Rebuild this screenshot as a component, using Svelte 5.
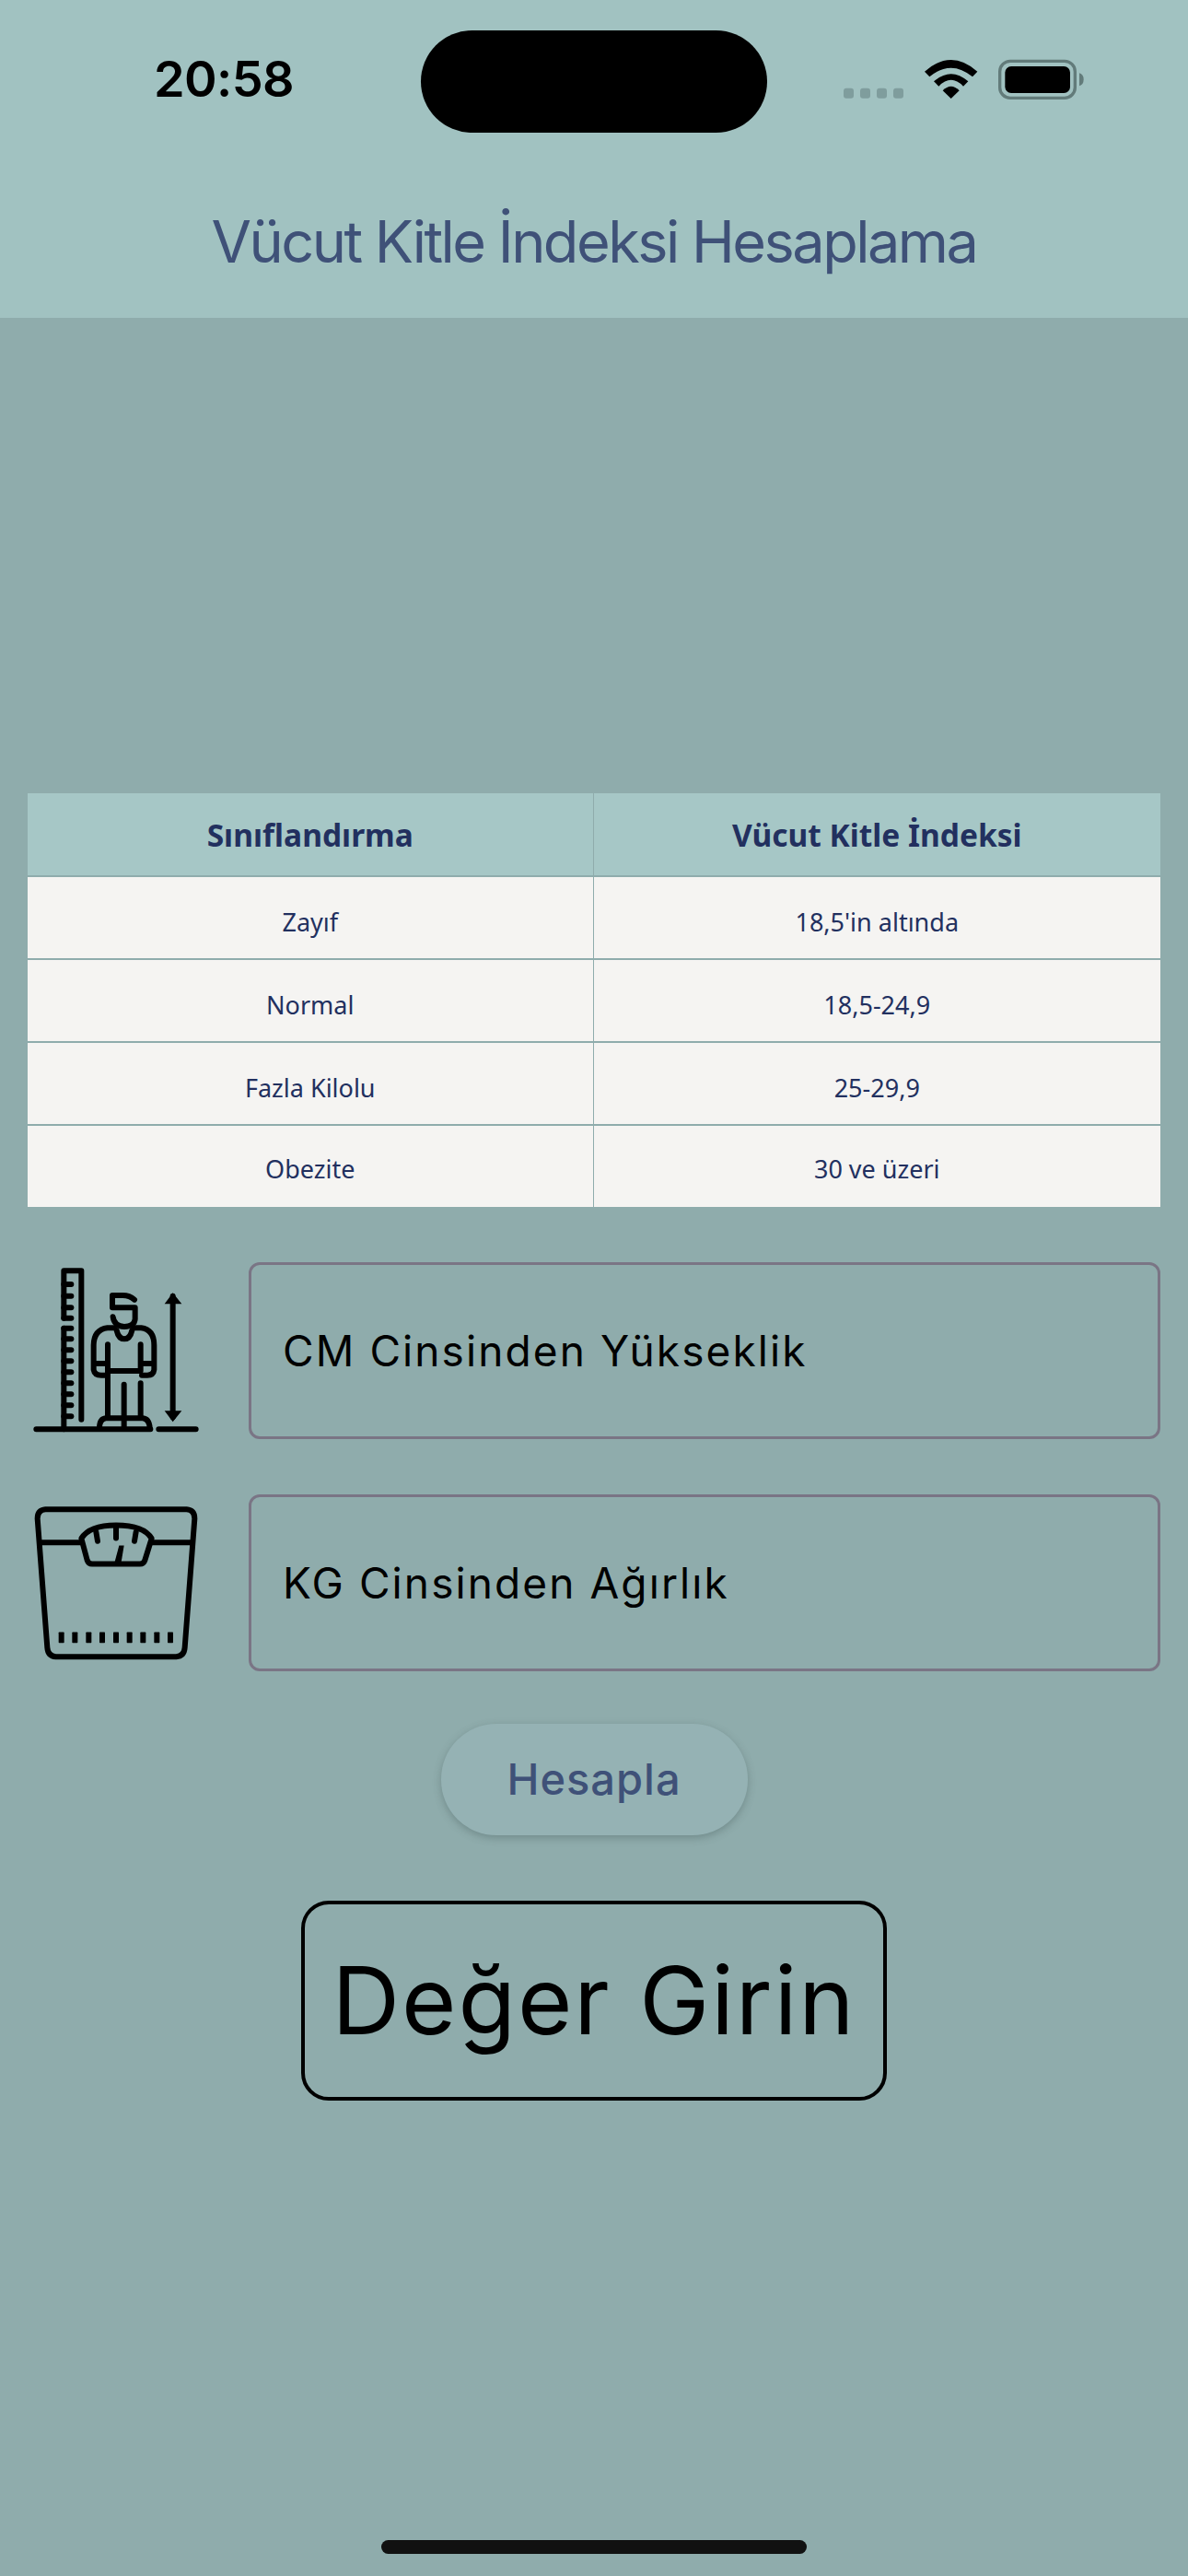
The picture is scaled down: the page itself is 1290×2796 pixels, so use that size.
<script>
	// BMI table rows
	const rows = [
		{ label: 'Zayıf', value: "18,5'in altında" },
		{ label: 'Normal', value: '18,5-24,9' },
		{ label: 'Fazla Kilolu', value: '25-29,9' },
		{ label: 'Obezite', value: '30 ve üzeri' }
	];

	let height = $state('');
	let weight = $state('');

	const rulerTicks = [102, 140, 178, 212, 245, 280, 316, 352, 388, 424, 460, 496, 532];
	const scaleDots = [140, 184, 229, 273, 318, 362, 406, 451, 495];
</script>

<main class="screen">
	<header class="top">
		<div class="status">
			<span class="time">20:58</span>
			<div class="island"></div>
			<svg class="status-icons" viewBox="0 0 960 270" aria-hidden="true">
				<g fill="#7f9d9d">
					<rect x="108" y="167" width="33" height="33" rx="9" />
					<rect x="162" y="167" width="33" height="33" rx="9" />
					<rect x="216" y="167" width="33" height="33" rx="9" />
					<rect x="270" y="167" width="33" height="33" rx="9" />
				</g>
				<path d="M372 113Q458 37 544 113L528 130Q458 72 388 130Z" />
				<path d="M402 145Q458 96 514 145L498 161Q458 120 418 161Z" />
				<path d="M431 175Q458 148 485 175L458 201Z" />
				<rect x="617" y="79" width="245" height="120" rx="34" fill="none" stroke="#627b7a" stroke-width="10" />
				<rect x="634" y="96" width="212" height="87" rx="20" />
				<path d="M876 118Q890 122 890 139Q890 156 876 160Z" fill="#627b7a" />
			</svg>
		</div>
		<h1>Vücut Kitle İndeksi Hesaplama</h1>
	</header>

	<section class="content">
		<table>
			<colgroup>
				<col class="first-col" />
				<col />
			</colgroup>
			<thead>
				<tr>
					<th>Sınıflandırma</th>
					<th>Vücut Kitle İndeksi</th>
				</tr>
			</thead>
			<tbody>
				{#each rows as row}
					<tr>
						<td>{row.label}</td>
						<td>{row.value}</td>
					</tr>
				{/each}
			</tbody>
		</table>

		<div class="field first">
			<svg class="icon" viewBox="0 30 720 576" aria-hidden="true">
				<g fill="none" stroke="#000" stroke-width="18" stroke-linecap="round" stroke-linejoin="round">
					<path d="M58 574H430M457 574H578" />
					<path d="M148 212V58H205V542M148 245V574" />
					{#each rulerTicks as y}
						<path d="M148 {y}H172" />
					{/each}
					<path d="M378 152Q362 138 340 138H306V178H380V215Q378 238 345 240Q312 238 308 208" />
					<path d="M312 244H290Q246 250 245 300V380Q248 398 270 398H288M376 244H400Q442 250 442 300V380Q440 398 420 398H402" />
					<path d="M320 252Q326 280 345 280Q364 280 370 252" />
					<path d="M291 298V536M398 298V384M398 424V536M291 384H398" />
					<path d="M250 360H288M402 360H438" />
					<path d="M344 428V570" />
					<path d="M264 570Q264 540 285 538H405Q426 540 428 570" />
					<path d="M503 140V535" />
				</g>
				<path d="M503 130L532 166H476ZM503 550L476 514H532Z" />
			</svg>
			<input placeholder="CM Cinsinden Yükseklik" bind:value={height} />
		</div>

		<div class="field">
			<svg class="icon" viewBox="0 21 720 573" aria-hidden="true">
				<g fill="none" stroke="#000" stroke-width="18" stroke-linecap="round" stroke-linejoin="round">
					<path d="M88 68H548Q574 70 574 98L542 518Q540 546 514 548H122Q96 546 94 518L62 98Q62 70 88 68Z" />
					<path d="M70 176H203M434 176H566" />
					<path d="M205 163Q232 120 318 120Q408 120 434 163L412 234Q408 246 396 246H240Q228 246 224 234Z" />
					<path d="M318 126V162M253 142L258 172M383 142L378 172" />
				</g>
				<path d="M312 246L328 186H344L334 246Z" />
				{#each scaleDots as x}
					<rect x={x - 9} y="468" width="18" height="35" rx="2" />
				{/each}
			</svg>
			<input placeholder="KG Cinsinden Ağırlık" bind:value={weight} />
		</div>

		<button type="button">Hesapla</button>

		<div class="result">Değer Girin</div>
	</section>

	<div class="home-bar"></div>
</main>

<style>
	:global(body) {
		margin: 0;
		background: #8facac;
	}

	.screen {
		position: relative;
		width: 1290px;
		height: 2796px;
		overflow: hidden;
		background: #8facac;
		font-family: Inter, 'Liberation Sans', sans-serif;
	}

	.top {
		height: 345px;
		box-sizing: border-box;
		padding-top: 33px;
		background: #a1c2c1;
	}

	.status {
		display: grid;
		grid-template-columns: 457px 376px 1fr;
		height: 111px;
	}

	.time {
		padding-left: 167px;
		font-size: 54px;
		font-weight: 600;
		letter-spacing: -0.6px;
		line-height: 66px;
		margin-top: 20px;
		color: #000;
	}

	.island {
		height: 111px;
		border-radius: 56px;
		background: #000;
	}

	.status-icons {
		display: block;
		width: 320px;
		height: 90px;
		margin: 7px 0 0 47px;
	}

	h1 {
		margin: 80px 0 0;
		font-size: 63px;
		font-weight: 400;
		letter-spacing: -2.5px;
		line-height: 76px;
		text-align: center;
		color: #3f5178;
	}

	.content {
		display: flex;
		flex-direction: column;
		align-items: center;
		padding-top: 516px;
	}

	table {
		width: 1230px;
		border-collapse: collapse;
		table-layout: fixed;
		font-family: 'Noto Sans', 'Open Sans', sans-serif;
		color: #22305f;
		text-align: center;
	}

	.first-col {
		width: 614px;
	}

	th {
		height: 89px;
		padding: 0;
		background: #a6c7c6;
		font-size: 33.5px;
		font-weight: 700;
		border-bottom: 2px solid #8facac;
	}

	td {
		height: 90px;
		box-sizing: border-box;
		padding: 8px 0 0;
		background: #f5f4f2;
		font-size: 27px;
		font-weight: 400;
		border-bottom: 2px solid #8facac;
	}

	tbody tr:last-child td {
		height: 89px;
		padding-top: 5px;
		border-bottom: 0;
	}

	th + th,
	td + td {
		border-left: 1px solid #8facac;
	}

	.field {
		display: flex;
		align-items: flex-start;
		gap: 10px;
		box-sizing: border-box;
		width: 100%;
		height: 192px;
		margin-top: 60px;
		padding: 0 30px 0 20px;
	}

	.icon {
		display: block;
		flex: none;
		width: 240px;
		height: 192px;
		filter: blur(0.7px);
	}

	input {
		flex: 1;
		min-width: 0;
		box-sizing: border-box;
		height: 192px;
		padding: 0 34px;
		border: 3px solid #7a7585;
		border-radius: 12px;
		background: transparent;
		font-family: Inter, 'Liberation Sans', sans-serif;
		font-size: 46px;
		letter-spacing: 2.1px;
		color: #000;
		outline: none;
	}

	input::placeholder {
		color: #000;
		opacity: 1;
	}

	button {
		width: 333px;
		height: 121px;
		margin-top: 57px;
		padding: 0 0 3px;
		border: 0;
		border-radius: 60px;
		background: #95b2b4;
		box-shadow: 0 3px 8px rgba(60, 80, 80, 0.35);
		font-family: Inter, 'Liberation Sans', sans-serif;
		font-size: 47px;
		font-weight: 500;
		letter-spacing: 1px;
		color: #3f5178;
	}

	.result {
		box-sizing: border-box;
		width: 636px;
		height: 217px;
		margin-top: 71px;
		border: 4px solid #000;
		border-radius: 30px;
		font-size: 102px;
		letter-spacing: 1.9px;
		line-height: 209px;
		text-align: center;
		color: #000;
	}

	.home-bar {
		position: absolute;
		left: 414px;
		bottom: 24px;
		width: 462px;
		height: 15px;
		border-radius: 8px;
		background: #111;
	}
</style>
